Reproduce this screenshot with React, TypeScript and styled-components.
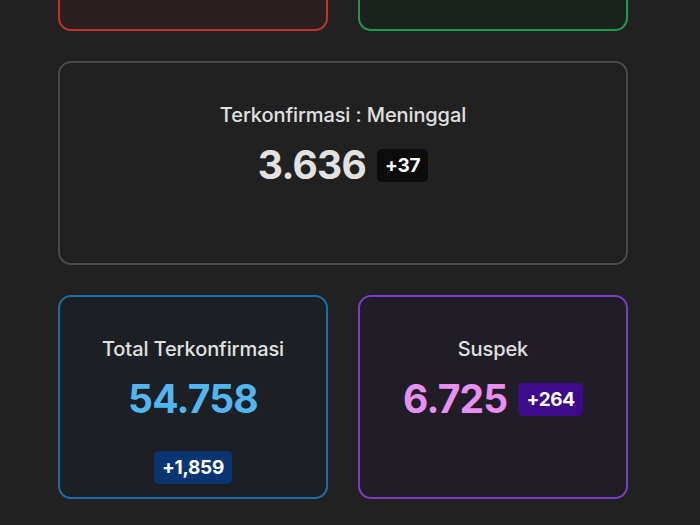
import styled, { createGlobalStyle } from "styled-components";

const GlobalStyle = createGlobalStyle`
  html, body {
    margin: 0;
    padding: 0;
    background: #212121;
    overflow: hidden;
  }
  body {
    font-family: "Inter", "Liberation Sans", sans-serif;
  }
`;

type Tone = "red" | "green" | "grey" | "blue" | "purple";

const tones: Record<Tone, { border: string; bg: string; value: string; badge: string }> = {
  red: { border: "#c6302f", bg: "#2a1f20", value: "#f07070", badge: "#6a1010" },
  green: { border: "#1f9a4a", bg: "#1b211d", value: "#5fd88a", badge: "#0b4a22" },
  grey: { border: "#4a4a4a", bg: "#212121", value: "#e2e2e2", badge: "#0c0c0c" },
  blue: { border: "#1b6fa8", bg: "#1c2024", value: "#52b6f0", badge: "#0a3572" },
  purple: { border: "#7b3cc4", bg: "#211d27", value: "#e88ff2", badge: "#3d0a8c" },
};

type Stat = { tone: Tone; title?: string; value?: string; delta?: string; wide?: boolean };

// the first row sits above the scrolled viewport, only its bottom edge shows
const data: Stat[] = [
  { tone: "red" },
  { tone: "green" },
  { tone: "grey", title: "Terkonfirmasi : Meninggal", value: "3.636", delta: "+37", wide: true },
  { tone: "blue", title: "Total Terkonfirmasi", value: "54.758", delta: "+1,859" },
  { tone: "purple", title: "Suspek", value: "6.725", delta: "+264" },
];

export default function App() {
  return (
    <>
      <GlobalStyle />
      <Page>
        <Grid>
          {data.map((d) => (
            <Card key={d.tone} $tone={d.tone} $wide={d.wide}>
              {d.title && (
                <>
                  <Title>{d.title}</Title>
                  <ValueRow>
                    <Value $tone={d.tone}>{d.value}</Value>
                    <Badge $tone={d.tone}>{d.delta}</Badge>
                  </ValueRow>
                </>
              )}
            </Card>
          ))}
        </Grid>
      </Page>
    </>
  );
}

const Page = styled.div`
  height: 525px;
  overflow: hidden;
  padding-left: 58px;
`;

const Grid = styled.div`
  width: 570px;
  margin-top: -173px;
  display: grid;
  grid-template-columns: 270px 270px;
  grid-auto-rows: 204px;
  gap: 30px;
`;

const Card = styled.div<{ $tone: Tone; $wide?: boolean }>`
  grid-column: ${(p) => (p.$wide ? "span 2" : "auto")};
  box-sizing: border-box;
  border: 2px solid ${(p) => tones[p.$tone].border};
  background: ${(p) => tones[p.$tone].bg};
  border-radius: 13px;
  display: flex;
  flex-direction: column;
  align-items: center;
  padding-top: 40px;
`;

const Title = styled.div`
  color: #e0e0e0;
  font-size: 20px;
  font-weight: 500;
  line-height: 24px;
  letter-spacing: -0.1px;
`;

const ValueRow = styled.div`
  margin-top: 14px;
  display: flex;
  flex-wrap: wrap;
  justify-content: center;
  align-items: center;
  column-gap: 11px;
  row-gap: 28px;
  padding: 0 30px;
`;

const Value = styled.div<{ $tone: Tone }>`
  color: ${(p) => tones[p.$tone].value};
  font-size: 39px;
  font-weight: 700;
  line-height: 48px;
  letter-spacing: -0.8px;
`;

const Badge = styled.div<{ $tone: Tone }>`
  background: ${(p) => tones[p.$tone].badge};
  color: #ffffff;
  font-size: 19px;
  font-weight: 700;
  line-height: 33px;
  padding: 0 8px;
  border-radius: 5px;
  letter-spacing: -0.3px;
`;
